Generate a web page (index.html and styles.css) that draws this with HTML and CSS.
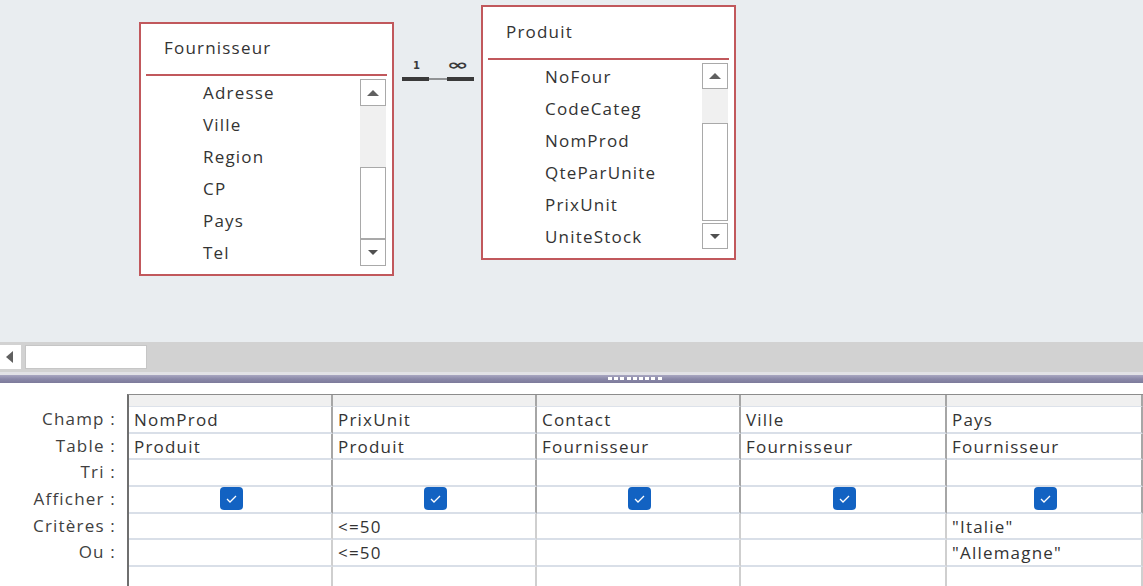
FILE: index.html
```html
<!DOCTYPE html>
<html lang="fr">
<head>
<meta charset="utf-8">
<title>Requête</title>
<link rel="stylesheet" href="styles.css">
</head>
<body>
<div class="app">
  <div class="design">
    <div class="tbl tbl-four">
      <div class="tbl-title">Fournisseur</div>
      <div class="tbl-rule"></div>
      <div class="tbl-body">
        <ul class="fields">
          <li>Adresse</li><li>Ville</li><li>Region</li><li>CP</li><li>Pays</li><li>Tel</li>
        </ul>
        <div class="vscroll">
          <div class="sb-btn"><svg width="12" height="6" viewBox="0 0 12 6"><polygon points="0,6 12,6 6,0" fill="#606060"/></svg></div>
          <div class="sb-track"></div>
          <div class="sb-thumb"></div>
          <div class="sb-btn"><svg width="10" height="5" viewBox="0 0 10 5"><polygon points="0,0 10,0 5,5" fill="#505050"/></svg></div>
        </div>
      </div>
    </div>

    <div class="rel">
      <svg class="rel-line" width="76" height="8" viewBox="0 0 76 8">
        <rect x="0" y="2" width="27" height="4" fill="#3a3a3a"/>
        <rect x="26" y="3.5" width="20" height="1" fill="#3a3a3a"/>
        <rect x="45" y="2" width="27" height="4" fill="#3a3a3a"/>
      </svg>
      <span class="rel-one">1</span>
      <span class="rel-many">∞</span>
    </div>

    <div class="tbl tbl-prod">
      <div class="tbl-title">Produit</div>
      <div class="tbl-rule"></div>
      <div class="tbl-body">
        <ul class="fields">
          <li>NoFour</li><li>CodeCateg</li><li>NomProd</li><li>QteParUnite</li><li>PrixUnit</li><li>UniteStock</li>
        </ul>
        <div class="vscroll">
          <div class="sb-btn"><svg width="12" height="6" viewBox="0 0 12 6"><polygon points="0,6 12,6 6,0" fill="#606060"/></svg></div>
          <div class="sb-track"></div>
          <div class="sb-thumb"></div>
          <div class="sb-btn"><svg width="10" height="5" viewBox="0 0 10 5"><polygon points="0,0 10,0 5,5" fill="#505050"/></svg></div>
        </div>
      </div>
    </div>
  </div>

  <div class="hscroll">
    <div class="hs-btn"><svg width="7" height="12" viewBox="0 0 7 12"><polygon points="7,0 7,12 0,6" fill="#606060"/></svg></div>
    <div class="hs-thumb"></div>
  </div>
  <div class="split-gap"></div>
  <div class="split"><span class="grip"></span></div>

  <div class="qbe">
    <div class="labels">
      <div class="lab-head"></div>
      <div class="lab">Champ :</div>
      <div class="lab">Table :</div>
      <div class="lab">Tri :</div>
      <div class="lab">Afficher :</div>
      <div class="lab">Critères :</div>
      <div class="lab">Ou :</div>
      <div class="lab"></div>
    </div>
    <div class="grid">
      <div class="c head"></div><div class="c head"></div><div class="c head"></div><div class="c head"></div><div class="c head"></div>

      <div class="c">NomProd</div><div class="c">PrixUnit</div><div class="c">Contact</div><div class="c">Ville</div><div class="c">Pays</div>
      <div class="c">Produit</div><div class="c">Produit</div><div class="c">Fournisseur</div><div class="c">Fournisseur</div><div class="c">Fournisseur</div>
      <div class="c"></div><div class="c"></div><div class="c"></div><div class="c"></div><div class="c"></div>
      <div class="c chk"><span class="cb"><svg width="11" height="8" viewBox="0 0 11 8"><polyline points="1,4 4,7 10,1" fill="none" stroke="#fff" stroke-width="1.3"/></svg></span></div>
      <div class="c chk"><span class="cb"><svg width="11" height="8" viewBox="0 0 11 8"><polyline points="1,4 4,7 10,1" fill="none" stroke="#fff" stroke-width="1.3"/></svg></span></div>
      <div class="c chk"><span class="cb"><svg width="11" height="8" viewBox="0 0 11 8"><polyline points="1,4 4,7 10,1" fill="none" stroke="#fff" stroke-width="1.3"/></svg></span></div>
      <div class="c chk"><span class="cb"><svg width="11" height="8" viewBox="0 0 11 8"><polyline points="1,4 4,7 10,1" fill="none" stroke="#fff" stroke-width="1.3"/></svg></span></div>
      <div class="c chk"><span class="cb"><svg width="11" height="8" viewBox="0 0 11 8"><polyline points="1,4 4,7 10,1" fill="none" stroke="#fff" stroke-width="1.3"/></svg></span></div>
      <div class="c lo"></div><div class="c lo">&lt;=50</div><div class="c lo"></div><div class="c lo"></div><div class="c lo">"Italie"</div>
      <div class="c lo"></div><div class="c lo">&lt;=50</div><div class="c lo"></div><div class="c lo"></div><div class="c lo">"Allemagne"</div>
      <div class="c lo"></div><div class="c lo"></div><div class="c lo"></div><div class="c lo"></div><div class="c lo"></div>
    </div>
  </div>
</div>
</body>
</html>
```

FILE: styles.css
```css
* { box-sizing: border-box; margin: 0; padding: 0; }
html, body { width: 1143px; height: 586px; overflow: hidden; }
body {
  font-family: "Open Sans", "Noto Sans", sans-serif;
  font-size: 17px;
  letter-spacing: 1.2px;
  color: #333;
  background: #fff;
}
.app { display: flex; flex-direction: column; height: 586px; }

/* ---- design canvas ---- */
.design {
  position: relative;
  height: 342px;
  flex: none;
  background: #e9edf0;
}
.tbl {
  position: absolute;
  width: 255px;
  height: 254px;
  background: #fff;
  border: 2px solid #c1585c;
  display: flex;
  flex-direction: column;
}
.tbl-four { left: 139px; top: 22px; }
.tbl-prod { left: 481px; top: 5px; height: 255px; }
.tbl-title {
  height: 50px;
  padding: 12px 0 0 23px;
  line-height: 24px;
}
.tbl-prod .tbl-title { height: 51px; padding-top: 13px; }
.tbl-rule {
  height: 2px;
  margin: 0 5px;
  background: #c1585c;
  flex: none;
}
.tbl-body {
  flex: 1;
  display: flex;
  overflow: hidden;
}
.fields {
  list-style: none;
  flex: 1;
  padding: 1px 0 0 62px;
}
.fields li { line-height: 32px; height: 32px; white-space: nowrap; }
.vscroll {
  width: 26px;
  margin: 3px 6px 0 0;
  display: flex;
  flex-direction: column;
}
.sb-btn {
  height: 27px;
  border: 1px solid #a9a9a9;
  background: #fff;
  display: flex;
  align-items: center;
  justify-content: center;
}
.sb-track { background: #f0f0f0; height: 61px; }
.sb-thumb { background: #fff; border: 1px solid #a9a9a9; height: 72px; }
.tbl-prod .sb-btn { height: 26px; }
.tbl-prod .sb-track { height: 34px; }
.tbl-prod .sb-thumb { height: 98px; margin-bottom: 2px; }

/* relation */
.rel { position: absolute; left: 402px; top: 58px; width: 76px; height: 26px; }
.rel-line { position: absolute; left: 0; top: 17px; }
.rel-one, .rel-many {
  position: absolute;
  font-family: "DejaVu Sans", sans-serif;
  font-weight: bold;
  letter-spacing: 0;
  color: #3a3a3a;
  line-height: 10px;
}
.rel-one { left: 11px; top: 3px; font-size: 10px; }
.rel-many { left: 45px; top: 2px; font-size: 15px; transform: scaleX(1.75); transform-origin: left center; }

/* ---- horizontal scroll ---- */
.hscroll {
  height: 30px;
  flex: none;
  background: #d2d2d2;
  display: flex;
  align-items: center;
  gap: 4px;
}
.hs-btn {
  width: 21px;
  height: 24px;
  background: #fff;
  display: flex;
  align-items: center;
  padding-left: 6px;
}
.hs-thumb {
  width: 122px;
  height: 24px;
  background: #fff;
  border: 1px solid #c6c6c6;
}
.split-gap { height: 3px; flex: none; background: #e2e2e6; }
.split {
  height: 8px;
  flex: none;
  background: linear-gradient(#a9a7c1, #8a88a8 50%, #7d7b9b);
  display: flex;
  justify-content: center;
  padding-left: 128px;
  padding-top: 2px;
}
.grip {
  width: 56px;
  height: 3px;
  background: repeating-linear-gradient(90deg, #fff 0 4px, transparent 4px 6.2px);
}

/* ---- QBE grid ---- */
.qbe {
  flex: 1;
  display: flex;
  padding-top: 11px;
  overflow: hidden;
}
.labels {
  width: 127px;
  flex: none;
  display: grid;
  grid-template-rows: 13px repeat(7, 26.667px);
  color: #404040;
}
.lab { text-align: right; padding-right: 11px; line-height: 24px; white-space: nowrap; }
.grid {
  flex: 1;
  border-left: 2px solid #6f6f6f;
  border-top: 1px solid #8c8c8c;
  display: grid;
  grid-template-columns: 204px 204px 204px 206px 1fr;
  grid-template-rows: 12px repeat(7, 26.667px);
}
.c {
  border-right: 2px solid #a6a6a6;
  border-bottom: 2px solid #d9dfe8;
  padding-left: 5px;
  line-height: 25px;
  white-space: nowrap;
  overflow: hidden;
}
.c.head { background: #f0f0f0; border-bottom: 1px solid #dde2ea; }
.c.lo { border-right-color: #cfcfcf; }
.c.chk { display: flex; align-items: center; justify-content: center; padding: 0 0 1px 2px; }
.cb {
  width: 23px;
  height: 23px;
  border-radius: 4px;
  background: #1262c2;
  display: flex;
  align-items: center;
  justify-content: center;
}
```
